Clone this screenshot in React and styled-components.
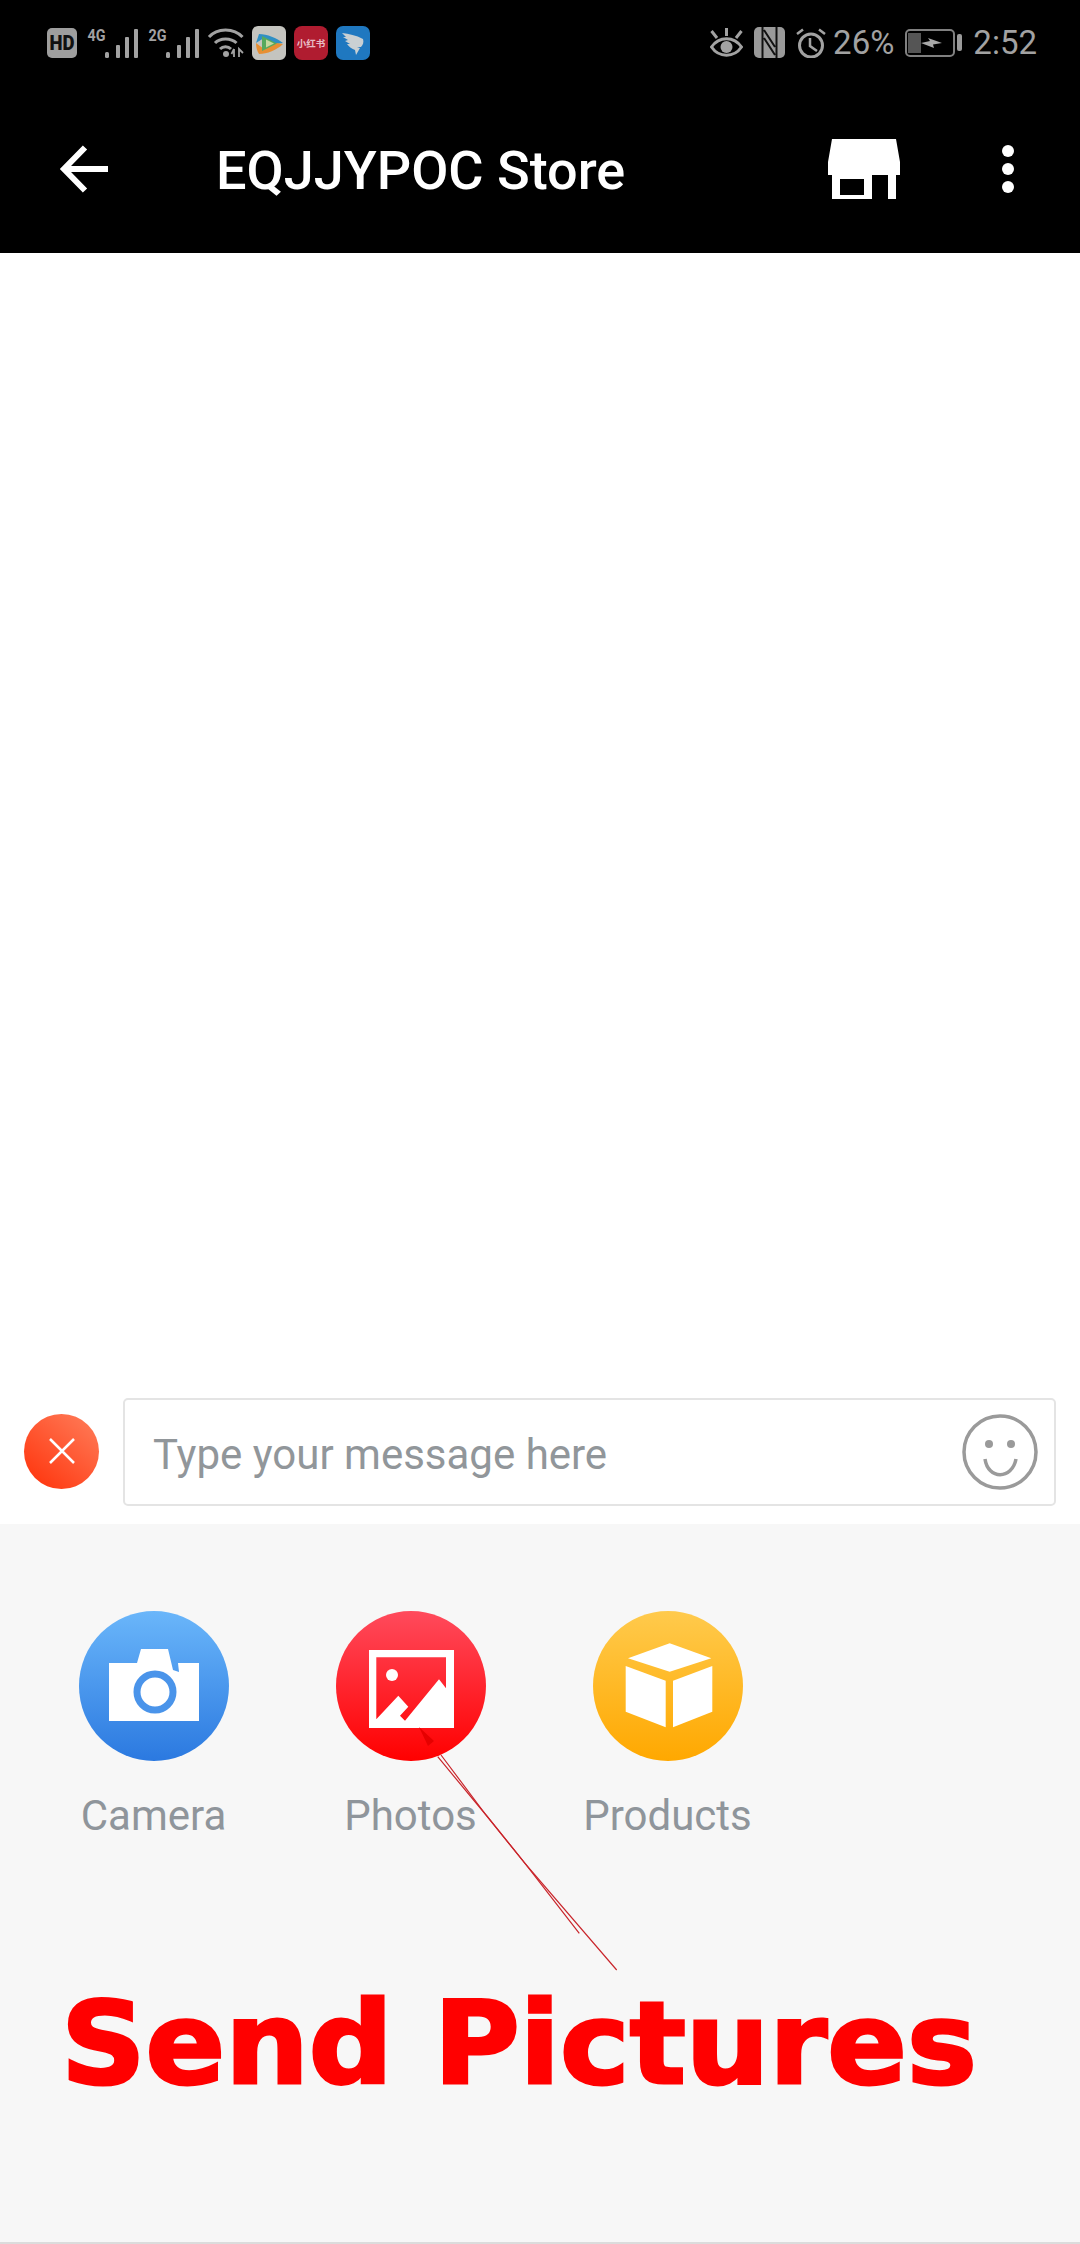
import React from 'react'
import styled, { createGlobalStyle } from 'styled-components'

const GlobalStyle = createGlobalStyle`
  html, body {
    margin: 0;
    padding: 0;
    background: #fff;
    font-family: Roboto, "Noto Sans", sans-serif;
  }
`

const Page = styled.div`
  width: 1080px;
  height: 2244px;
  display: flex;
  flex-direction: column;
  background: #fff;
  overflow: hidden;
`

const Head = styled.header`
  background: #000;
  flex: none;
`

const StatusBar = styled.div`
  height: 85px;
  box-sizing: border-box;
  padding: 0 43px 0 47px;
  display: flex;
  align-items: center;
  justify-content: space-between;
`

const StatusGroup = styled.div`
  display: flex;
  align-items: center;
  gap: ${props => props.$gap}px;
`

const StatusText = styled.span`
  color: #a2a2a2;
  font-size: 33px;
  line-height: 36px;
`

const Percent = styled(StatusText)`
  margin-left: -4px;
`

const SignalSvg = styled.svg`
  overflow: visible;
`

const Toolbar = styled.div`
  height: 168px;
  display: flex;
  align-items: center;
  padding: 0 66px 0 59px;
  color: #fff;
`

const Title = styled.h1`
  flex: 1;
  margin: 4px 0 0 107px;
  font-size: 54px;
  line-height: 60px;
  font-weight: 500;
`

const Dots = styled.div`
  margin-left: 102px;
  display: flex;
  flex-direction: column;
  gap: 6px;
`

const Dot = styled.span`
  width: 12px;
  height: 12px;
  border-radius: 50%;
  background: #fff;
`

const Thread = styled.main`
  flex: 1;
`

const Composer = styled.div`
  flex: none;
  display: flex;
  align-items: center;
  gap: 24px;
  padding: 0 24px 18px 24px;
`

const CloseButton = styled.button`
  flex: none;
  width: 75px;
  height: 75px;
  margin-top: -2px;
  padding: 0;
  border: 0;
  border-radius: 50%;
  background: linear-gradient(40deg, #ff3008, #ff7f5c);
  display: flex;
  align-items: center;
  justify-content: center;
`

const InputBox = styled.div`
  flex: 1;
  height: 108px;
  box-sizing: border-box;
  border: 2px solid #e4e4e4;
  border-radius: 5px;
  padding: 0 16px 0 28px;
  display: flex;
  align-items: center;
  justify-content: space-between;
`

const Placeholder = styled.span`
  margin-top: 5px;
  color: #91969a;
  font-size: 42px;
  line-height: 50px;
`

const Panel = styled.section`
  position: relative;
  flex: none;
  height: 720px;
  box-sizing: border-box;
  background: #f7f7f7;
  border-bottom: 2px solid #dcdcdc;
  padding: 87px 0 0 25px;
`

const Tools = styled.div`
  display: flex;
`

const Tool = styled.div`
  width: 257px;
  display: flex;
  flex-direction: column;
  align-items: center;
`

const ToolCircle = styled.div`
  width: 150px;
  height: 150px;
  border-radius: 50%;
  background: linear-gradient(180deg, ${props => props.$from}, ${props => props.$to});
`

const ToolLabel = styled.span`
  margin-top: 30px;
  color: #8f959b;
  font-size: 42px;
  line-height: 50px;
`

const Callout = styled.div`
  margin: 138px 0 0 36px;
  width: max-content;
  color: #ff0000;
  font-family: "DejaVu Sans", Verdana, sans-serif;
  font-weight: 700;
  font-size: 114px;
  line-height: 130px;
  white-space: nowrap;
  -webkit-text-stroke: 3px #ff0000;
  transform: scaleX(1.03);
  transform-origin: left center;
`

const Annotation = styled.svg`
  position: absolute;
  left: 0;
  top: 0;
  pointer-events: none;
`

const HdIcon = () => (
  <svg width="30" height="30" viewBox="0 0 30 30">
    <rect width="30" height="30" rx="5" fill="#9e9e9e" />
    <text x="15" y="22" textAnchor="middle" fontFamily="Roboto, sans-serif" fontWeight="900" fontSize="20" fill="#111" textLength="25" lengthAdjust="spacingAndGlyphs">HD</text>
  </svg>
)

const SignalIcon = ({ label }) => (
  <SignalSvg width="53" height="30" viewBox="0 0 53 30">
    <text x="2.500" y="13" fontFamily="Roboto, sans-serif" fontWeight="700" fontSize="17" fill="#a2a2a2" textLength="18" lengthAdjust="spacingAndGlyphs">{label}</text>
    <rect x="20" y="24" width="4" height="6" rx="1.500" fill="#a2a2a2" />
    <rect x="31" y="17" width="4" height="13" rx="1" fill="#a2a2a2" />
    <rect x="40" y="9" width="4" height="21" rx="1" fill="#a2a2a2" />
    <rect x="49" y="1" width="4" height="29" rx="1" fill="#a2a2a2" />
  </SignalSvg>
)

const WifiIcon = () => (
  <svg width="37" height="30" viewBox="0 0 37 30" fill="none" stroke="#a2a2a2" strokeWidth="3">
    <path d="M2 9 C10 -0.500 27 -0.500 35.500 9" />
    <path d="M8 15 C13 9.500 24 9.500 29.500 15" />
    <path d="M13 21 C16 18 21 18 24 21" />
    <circle cx="19" cy="26" r="3" fill="#a2a2a2" stroke="none" />
    <path d="M27 21 L27 29 M24.500 26 L27 21 M32 29 L32 21 L36 25" strokeWidth="1.800" />
  </svg>
)

const VideoApp = () => (
  <svg width="34" height="34" viewBox="0 0 34 34">
    <rect width="34" height="34" rx="6" fill="#c4c4bf" />
    <path d="M4 17 L7 8 C15 8 25 12 31 17 L24 18 L12 12Z" fill="#2f8fc4" />
    <path d="M4 17 C4 21 5 25 7 28 C15 28 25 24 31 18 L24 17 L12 23Z" fill="#e78f32" />
    <path d="M10 10 L25 17.500 L10 25Z" fill="#56a95c" />
    <path d="M14 13.500 L22 17.500 L14 21.500Z" fill="#c5d99e" />
  </svg>
)

const RedApp = () => (
  <svg width="34" height="34" viewBox="0 0 34 34">
    <rect width="34" height="34" rx="8" fill="#b01c30" />
    <text x="17" y="21" textAnchor="middle" fontFamily='"Noto Sans CJK SC", sans-serif' fontSize="9.500" fontWeight="700" fill="#e8bcc4">小红书</text>
  </svg>
)

const BlueApp = () => (
  <svg width="34" height="34" viewBox="0 0 34 34">
    <rect width="34" height="34" rx="7" fill="#1f78c0" />
    <path d="M6 7 C13 8 20 9 27 13 C28 16 27 19 25 21 L21 21 L24 22 L20 29 L19 24 C16 23 13 21 11 18 L14 18 L9 15 L12 14 L7 11 L10 11Z" fill="#c9d0d3" />
  </svg>
)

const EyeIcon = () => (
  <svg width="33" height="30" viewBox="0 0 33 30" fill="none" stroke="#a2a2a2" strokeWidth="3">
    <path d="M1.500 19 C9 8 24 8 31.500 19 C24 30 9 30 1.500 19Z" />
    <circle cx="16.500" cy="19" r="6" fill="#a2a2a2" stroke="none" />
    <path d="M16.500 0 V8 M1.500 3 L7 10 M31.500 3 L26 10" />
  </svg>
)

const NfcIcon = () => (
  <svg width="31" height="31" viewBox="0 0 31 31">
    <rect width="31" height="31" rx="5" fill="#9a9a9a" />
    <path d="M8.500 31 V0 M22.500 31 V0 M10 3 L21 20 M10 11 L21 28" fill="none" stroke="#111" strokeWidth="2" />
  </svg>
)

const AlarmIcon = () => (
  <svg width="30" height="30" viewBox="0 0 30 30" fill="none" stroke="#a2a2a2" strokeWidth="3">
    <circle cx="15" cy="17.500" r="11.500" />
    <path d="M14 10 V18 L21 23" strokeWidth="2.500" />
    <path d="M1 6 L7 1.500 M29 6 L23 1.500" strokeWidth="2.500" />
  </svg>
)

const BatteryIcon = () => (
  <svg width="57" height="28" viewBox="0 0 57 28">
    <rect x="1" y="1" width="48" height="26" rx="4" fill="none" stroke="#808080" strokeWidth="2" />
    <rect x="3" y="4" width="13" height="20" fill="#555" />
    <rect x="52" y="5" width="5" height="17" rx="2" fill="#9a9a9a" />
    <path d="M16 14 L25 12 L23 9 L37 14 L28 15.500 L29 19 Z" fill="#a8a8a8" />
  </svg>
)

const BackIcon = () => (
  <svg width="50" height="48" viewBox="0 0 50 48" fill="none" stroke="#fff" strokeWidth="6">
    <path d="M49 24 H5 M26 2.500 L5 24 L26 45.500" />
  </svg>
)

const StoreIcon = () => (
  <svg width="72" height="60" viewBox="0 0 72 60">
    <path fillRule="evenodd" fill="#fff" d="M4 0 H68 L72 23 V36 H68 V60 H60 V36 H44 V60 H4 V36 H0 V23Z M12 40 V56 H36 V40Z" />
  </svg>
)

const CloseIcon = () => (
  <svg width="28" height="28" viewBox="0 0 28 28" stroke="#fff" strokeWidth="2.500">
    <path d="M2 2 L26 26 M26 2 L2 26" />
  </svg>
)

const SmileIcon = () => (
  <svg width="76" height="76" viewBox="0 0 76 76" fill="none" stroke="#9a9a9a" strokeWidth="3.500">
    <circle cx="38" cy="38" r="36" />
    <circle cx="27" cy="30" r="4" fill="#9a9a9a" stroke="none" />
    <circle cx="49" cy="30" r="4" fill="#9a9a9a" stroke="none" />
    <path d="M23 45 C26 66 50 66 54 45" />
  </svg>
)

const CameraIcon = () => (
  <svg width="150" height="150" viewBox="0 0 150 150">
    <path fill="#fff" d="M30 52 H58 L62 38 H89 L94 59 L100 61 L99 52 H120 V110 H30Z" />
    <circle cx="76" cy="81" r="18" fill="#fff" stroke="#4a94ea" strokeWidth="7" />
  </svg>
)

const PhotosIcon = () => (
  <svg width="150" height="150" viewBox="0 0 150 150">
    <path
      fill="#fff"
      fillRule="evenodd"
      d="M33 39 H118 V117 H33Z M40.300 46.300 V108.300 L62.300 84.700 L72.300 95.700 L64 104.700 L69 109.700 L103 68.300 L110 77.300 V46.300Z"
    />
    <circle cx="56" cy="64" r="6" fill="#fff" />
  </svg>
)

const BoxIcon = () => (
  <svg width="150" height="150" viewBox="0 0 150 150" fill="#fff">
    <path d="M76.700 32.300 L118.300 47.300 L76.700 60.700 L35 47.300Z" />
    <path d="M32.700 55 L72.700 69.700 V116.300 L32.700 100.700Z" />
    <path d="M80 69.700 L119.300 55 V100.700 L80 116.300Z" />
  </svg>
)

const tools = [
  { label: 'Camera', from: '#6ab6fa', to: '#2b79e0', Icon: CameraIcon },
  { label: 'Photos', from: '#ff4a5c', to: '#ff0000', Icon: PhotosIcon },
  { label: 'Products', from: '#ffca4c', to: '#ffa800', Icon: BoxIcon },
]

export default function App() {
  return (
    <Page>
      <GlobalStyle />
      <Head>
        <StatusBar>
          <StatusGroup $gap={8}>
            <HdIcon />
            <SignalIcon label="4G" />
            <SignalIcon label="2G" />
            <WifiIcon />
            <VideoApp />
            <RedApp />
            <BlueApp />
          </StatusGroup>
          <StatusGroup $gap={11}>
            <EyeIcon />
            <NfcIcon />
            <AlarmIcon />
            <Percent>26%</Percent>
            <BatteryIcon />
            <StatusText>2:52</StatusText>
          </StatusGroup>
        </StatusBar>
        <Toolbar>
          <BackIcon />
          <Title>EQJJYPOC Store</Title>
          <StoreIcon />
          <Dots>
            <Dot />
            <Dot />
            <Dot />
          </Dots>
        </Toolbar>
      </Head>
      <Thread />
      <Composer>
        <CloseButton>
          <CloseIcon />
        </CloseButton>
        <InputBox>
          <Placeholder>Type your message here</Placeholder>
          <SmileIcon />
        </InputBox>
      </Composer>
      <Panel>
        <Tools>
          {tools.map(({ label, from, to, Icon }) => (
            <Tool key={label}>
              <ToolCircle $from={from} $to={to}>
                <Icon />
              </ToolCircle>
              <ToolLabel>{label}</ToolLabel>
            </Tool>
          ))}
        </Tools>
        <Callout>Send Pictures</Callout>
        {/* hand drawn pointer on top of the screenshot, page coords shifted by the panel top */}
        <Annotation width="1080" height="720" viewBox="0 1524 1080 720" fill="none" stroke="#c9252b" strokeWidth="1.200">
          <path d="M419 1727 L434 1741 L428 1746Z" fill="#e60000" stroke="none" />
          <path d="M437.700 1756.700 L486 1815 L525 1863.300 L579.300 1933.300" />
          <path d="M441 1755 L486 1815 L525 1863.300 L616.700 1970" />
        </Annotation>
      </Panel>
    </Page>
  )
}
